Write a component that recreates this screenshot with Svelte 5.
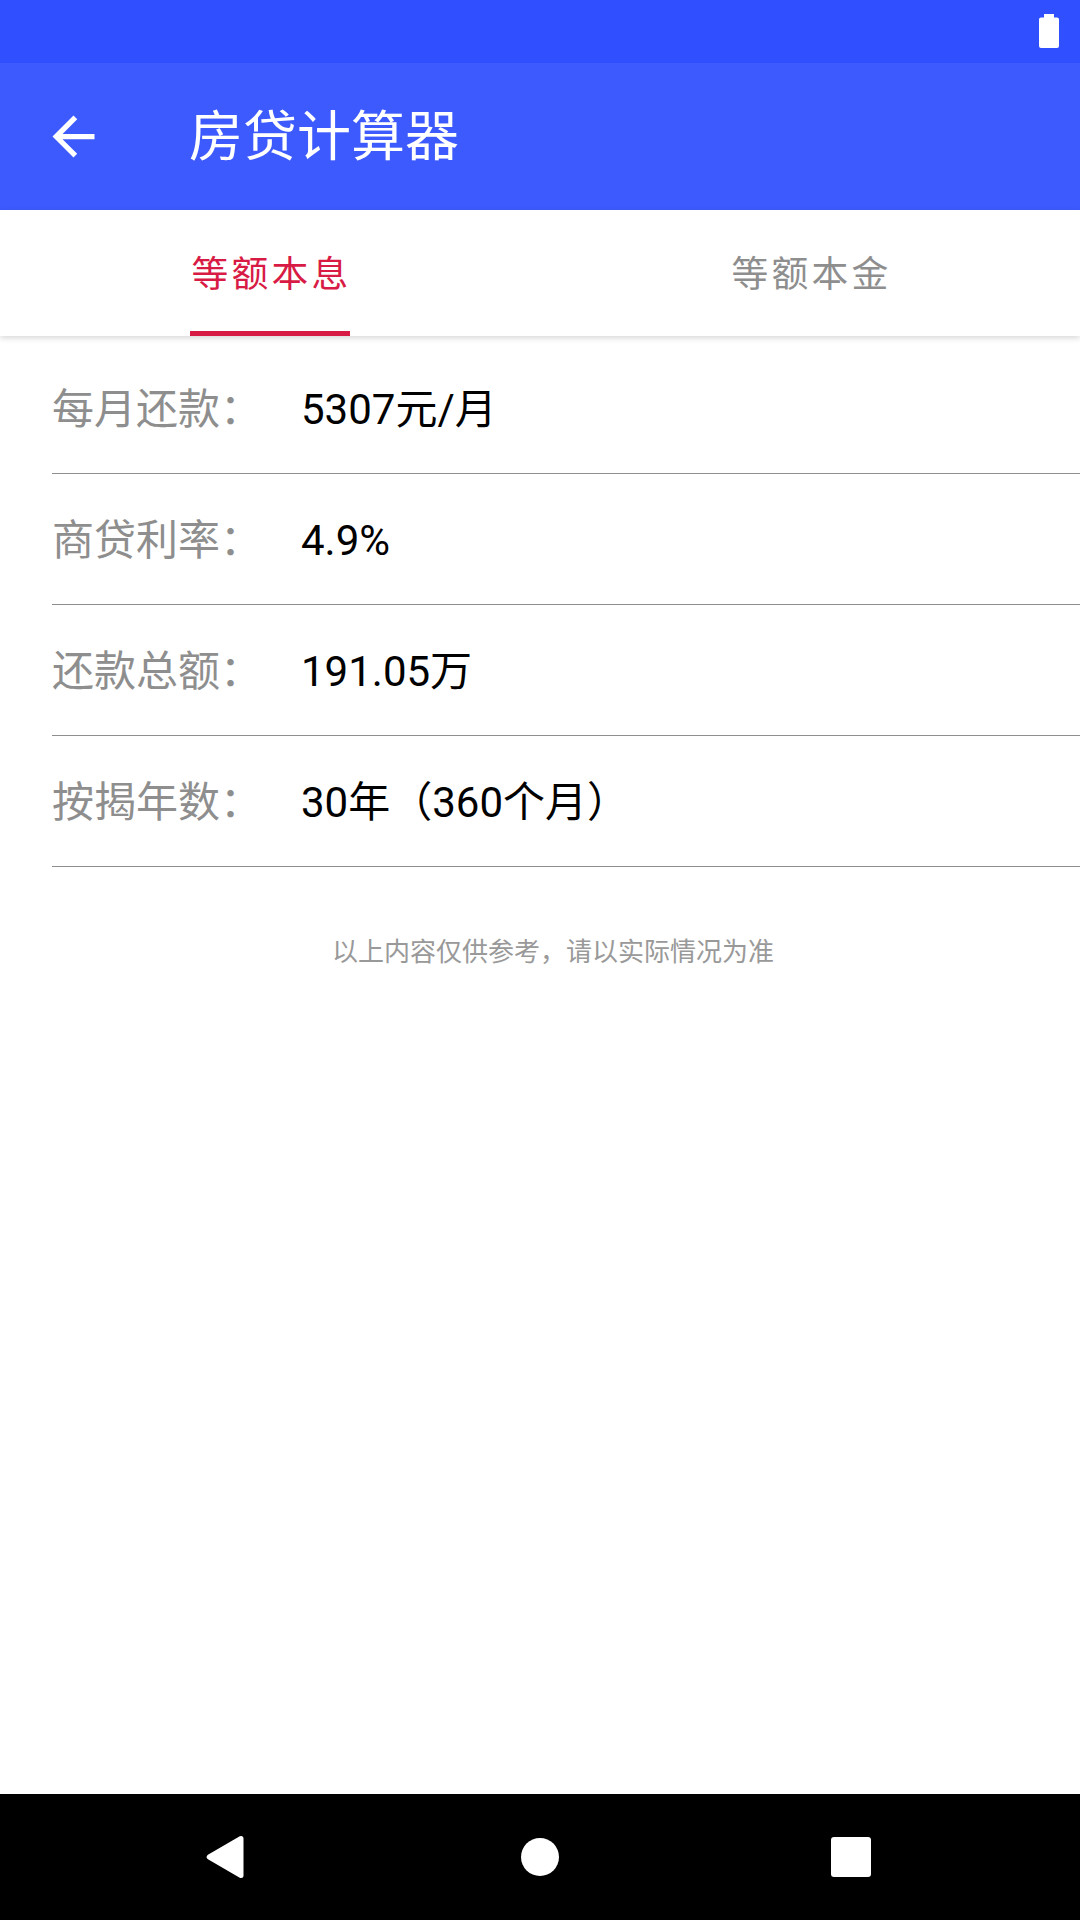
<script>
  const rows = [
    ['每月还款：', '5307元/月'],
    ['商贷利率：', '4.9%'],
    ['还款总额：', '191.05万'],
    ['按揭年数：', '30年（360个月）']
  ];
</script>

<div class="page">
  <div class="status">
    <svg class="battery" width="20" height="34" viewBox="0 0 20 34"><path d="M5 0h10v3.5h3a2 2 0 0 1 2 2V32a2 2 0 0 1-2 2H2a2 2 0 0 1-2-2V5.500a2 2 0 0 1 2-2h3z" fill="#fff"/></svg>
  </div>
  <header class="appbar">
    <svg class="back" width="63" height="63" viewBox="0 0 24 24"><path d="M20 11H7.83l5.59-5.59L12 4l-8 8 8 8 1.41-1.41L7.83 13H20v-2z" fill="#fff"/></svg>
    <h1>房贷计算器</h1>
  </header>
  <nav class="tabs">
    <div class="tab active"><span>等额本息</span></div>
    <div class="tab"><span>等额本金</span></div>
  </nav>
  <main class="content">
    <div class="list">
      {#each rows as [label, value]}
        <div class="row">
          <span class="label">{label}</span>
          <span class="value">{value}</span>
        </div>
      {/each}
    </div>
    <p class="note">以上内容仅供参考，请以实际情况为准</p>
  </main>
  <footer class="navbar">
    <svg class="tri" width="40" height="44" viewBox="0 0 40 44"><path d="M3.200 22 35 3.500v37z" fill="#fff" stroke="#fff" stroke-width="5" stroke-linejoin="round"/></svg>
    <div class="home"></div>
    <div class="recent"></div>
  </footer>
</div>

<style>
  :global(body) {
    margin: 0;
    background: #fff;
  }
  .page {
    width: 1080px;
    height: 1920px;
    display: flex;
    flex-direction: column;
    font-family: Roboto, "Noto Sans CJK SC", sans-serif;
    background: #fff;
    overflow: hidden;
  }
  .status {
    height: 63px;
    flex: none;
    background: #304ffe;
    display: flex;
    justify-content: flex-end;
    align-items: flex-start;
    padding: 14px 21px 0 0;
    box-sizing: border-box;
  }
  .appbar {
    height: 147px;
    flex: none;
    background: #3d5afe;
    display: flex;
    align-items: center;
    padding-left: 42px;
  }
  .back {
    flex: none;
  }
  h1 {
    margin: 3px 0 0 84px;
    font-size: 54px;
    font-weight: 400;
    color: #fff;
    line-height: 1;
  }
  .tabs {
    height: 126px;
    flex: none;
    display: flex;
    background: #fff;
    box-shadow: 0 2px 6px rgba(0, 0, 0, 0.16);
    position: relative;
  }
  .tab {
    flex: 1;
    display: flex;
    justify-content: center;
    color: #8e8e8e;
    font-size: 36.75px;
    letter-spacing: 3.28px;
  }
  .tab span {
    display: flex;
    align-items: center;
    box-sizing: border-box;
    width: 160px;
    height: 126px;
    padding-left: 1.5px;
    border-bottom: 5px solid transparent;
    white-space: nowrap;
  }
  .tab.active {
    color: #d81b45;
  }
  .tab.active span {
    border-bottom-color: #d81b45;
  }
  .list {
    margin-left: 52px;
    padding-top: 7px;
  }
  .row {
    height: 131px;
    display: flex;
    align-items: center;
    border-bottom: 1px solid #8e8e8e;
    box-sizing: border-box;
    padding-top: 4px;
    font-size: 42px;
    line-height: 56px;
  }
  .label {
    width: 249px;
    flex: none;
    color: #8e8e8e;
  }
  .value {
    color: #000;
  }
  .note {
    margin: 67px 0 0 26px;
    text-align: center;
    font-size: 26px;
    line-height: 36px;
    color: #999;
  }
  .content {
    flex: 1;
  }
  .navbar {
    height: 126px;
    flex: none;
    background: #000;
    display: flex;
    align-items: center;
    padding-left: 206px;
    box-sizing: border-box;
  }
  .tri {
    flex: none;
  }
  .home {
    flex: none;
    width: 38px;
    height: 38px;
    border-radius: 50%;
    background: #fff;
    margin: 0 272px 0 275px;
  }
  .recent {
    flex: none;
    width: 40px;
    height: 40px;
    border-radius: 3px;
    background: #fff;
  }
</style>
